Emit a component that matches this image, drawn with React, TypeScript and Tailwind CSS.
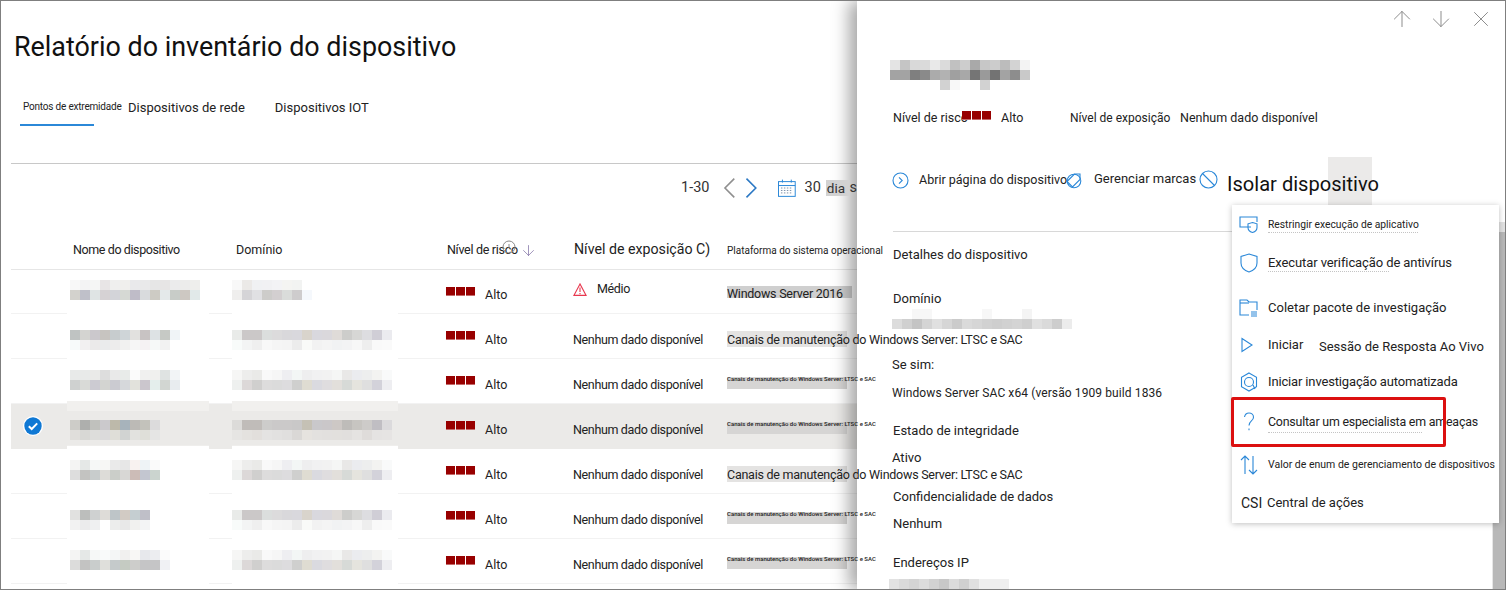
import { ReactNode } from 'react';
import { ArrowDown, ArrowUp, X } from 'lucide-react';

type Grid = string[][];

const split = (s: string) => s.split(' ').map((c) => '#' + c);

const names: Grid[] = [
  [split('f8f8f8 f3f3f4 f5f6f5 e8e5e6 efefee f0efed e9e9eb e9e9ea e6e6e6 e7e5e5 ebebec ececeb eeeeec'), split('d3d2cd bfc0c9 dfe4e4 d6d2d4 d3d4d9 d6d9d4 bfbcc8 d9dbdd cdcbc4 e4e9ea c8ccc8 cdc8c2 e1e9e9')],
  [split('bfc3c2 d4d4d1 cbc8cc c7c4c0 c7ccce cfd5d8 e2e1df c8c3c3 dde2e4 c6c9c5 f0f4f7'), split('f7fafa f2f0f1 ebeaea eaebec edecec f1f1f0 f6f6f6 f5f2f3 f6f9f8 f2f2f2')],
  [split('e8eae9 e8eae9 eaeae8 dddddd e9e9e9 e8ebe9 fbfbfb f0f0ef f0f0ee dfe3e2 f2f4f6'), split('cfd1d0 d9dad7 cccbd2 d3d4d1 cbcbd1 d6d8db e2e2dc cbc6cd e4eeec d2d6d2 e8ecef')],
  [split('cdccc8 aeafad c0c1bd cbc9cc bdb9aa a7b3bb bcbab6 c3c2bb dcdbdc'), split('e0dedb d8d8d5 dddddb dbdadb dfded8 d1d3d2 e2e2df dfdfd9 e5e5e4')],
  [split('f4f4f3 e5e8e7 f6f8f7 f7f7f5 eaeaea e7e7e7 f8f2f0 eef3f6 fafafa'), split('dddddd c3c3c1 c8cccc dddcd8 cbcec9 d8d7d5 ccbcb7 c3c6d0 cbd4cf')],
  [split('e1e1e0 bcbebc cfd1d1 dedcd8 bec5c8 d2cbc4 c5ced1 bfbfc8'), split('f2f2f2 ebebec eff0f1 ffffff ecedec e8e8e8 f1f1ef f3f4f5')],
  [split('f4f4f3 e5e8e7 f6f8f7 f9fafa f4f6f6 f1f0ef f8f7f5 e7e8ec ecedf0 fbfbfb'), split('dcdcdb c3c3c2 c9cdcc dfdfdb c5cacb c5cbc2 cdcdcb c5c5c6 c5c5c6 f0f1f4')],
];

const domainDark: Grid = [
  split('e9ebe9 cbc8c8 cbc8c8 dbdedd dcdbdc d9d8db d9d8dd d9d4cc d9d8de dad8dc dfdbd8 cdcdcb d7d7d5 dddde0 d0ced6 ebebef'),
  split('f8fbfa f3f4f4 efefef f8f8f8 f5f5f5 f4f4f4 ececec f9faf8 f2f2f2 f4f4f4 f1f2f3 f3f3f4 f7f7f7 eeeeee f9f9f9 fafafa'),
];
const domainLight: Grid = [
  split('f6f6f5 ededec eaeae8 f9f9f9 f6f6f6 eeeef1 f3f6f5 eeeeef f1f1f2 f2f2f2 f5f6f5 e9e8e7 ebecef edeeee f3f3f1 f9fafa'),
  split('eef0ef dcd8d8 d0cfce dddcdc dbdbdb dddcde cfcfce dfdcd2 dadae0 dfdddf e2dfdb d7dad7 e5e4de dfdfdf d3d2da eeeef1'),
];
const domains: Grid[] = [
  [split('f8f8f8 ebe9e7 f0f1f3 f1f1f3 f3f3f5 f4f4f2 f2f3f2'), split('efeeed d5d4d7 e0e0e3 cdccca d3cfd0 dadcda cecccd f5f8fc')],
  domainDark,
  domainLight,
  [
    split('dcdbd9 c0bcb9 c0bcb9 cdcccb cbc9c9 cbc9c9 c9c8c8 c5c1b5 c9c8cb cac7c9 cdc8c5 bebcb9 c7c5c1 cdcbc9 c0bec3 dbdadc'),
    split('e6e5e3 e4e2df e2dfdc e4e3e2 e2e1e0 e0dfde dad8d6 e6e3df e3e1df e2e0de e2e0dd e1dfdd e5e3e1 dfdcda e5e3e2 e6e4e3'),
  ],
  domainLight,
  domainDark,
  domainLight,
];

const panelTitle: Grid = [
  split('e4e4e4 c5c5c5 d9d9d9 dadada e9e9e9 dbdbdb c1c1c1 cdcdcd a9a9a9 c7c7c7 cccccc bcbcbc d3d3d3 f3f3f3'),
  split('a3a3a3 a3a3a3 7f7f7f 8a8a8a ababab b2b2b2 a0a0a0 a8a8a8 757575 9a9a9a 737373 a3a3a3 8d8d8d c9c9c9'),
  split('ffffff ffffff ffffff ffffff ffffff d2d2d2 f8f8f8 ffffff ffffff d2d2d2 ffffff ffffff ffffff ffffff'),
];
const panelDomain: Grid = [
  split('ffffff ffffff f7f7f7 f7f7f7 ffffff ffffff ffffff ffffff ffffff f7f7f7 ffffff ffffff ffffff f4f4f4 ffffff ffffff ffffff ffffff'),
  split('dcdcdc d0d0d0 c4c4c4 d4d4d4 e0e0e0 d6d6d6 cbcbcb dadada d6d6d6 d1d1d1 cecece d1d1d1 d4d4d4 cfcfcf e0e0e0 dadada cdcdcd ececec'),
];
const panelIp: Grid = [split('e2e2e2 dadada d4d4d4 dcdcdc d2d2d2 c8c8c8 dcdcdc d0d0d0 e0e0e0 efefef efefef efefef')];

function Mosaic({ rows }: { rows: Grid }) {
  return (
    <div className="relative flex flex-col">
      {rows.map((row, i) => (
        <div key={i} className="flex h-[10px]">
          {row.map((color, j) => (
            <div key={j} className="h-[10px] w-[10px]" style={{ backgroundColor: color }} />
          ))}
        </div>
      ))}
    </div>
  );
}

function RiskBars({ className = '' }: { className?: string }) {
  return (
    <div className={'flex gap-px ' + className}>
      <div className="h-[9px] w-[9px] border-b border-[#c46a6a] bg-[#980000]" />
      <div className="h-[9px] w-[9px] border-b border-[#c46a6a] bg-[#980000]" />
      <div className="h-[9px] w-[9px] border-b border-[#c46a6a] bg-[#980000]" />
    </div>
  );
}

// rows of the list, top to bottom
const rowInfo = [
  { nameTop: 10, exposure: 'warn', platform: 'server2016' },
  { nameTop: 16, exposure: 'none', platform: 'long' },
  { nameTop: 11, exposure: 'none', platform: 'tiny' },
  { nameTop: 16, exposure: 'none', platform: 'tiny', selected: true },
  { nameTop: 11, exposure: 'none', platform: 'long' },
  { nameTop: 16, exposure: 'none', platform: 'tiny' },
  { nameTop: 11, exposure: 'none', platform: 'tiny' },
];

function Platform({ kind }: { kind: string }) {
  if (kind === 'server2016') {
    return (
      <div className="relative flex h-full items-center pt-[5px]">
        <div className="absolute left-0 top-[16px] h-[12px] w-[125px] bg-[#cfcfcf]" />
        <span className="relative z-20 whitespace-nowrap text-[12.5px] tracking-[-0.25px] text-[#222]">Windows Server 2016</span>
      </div>
    );
  }
  if (kind === 'long') {
    return (
      <div className="relative flex h-full items-center pt-[8px]">
        <div className="absolute left-0 top-[17px] h-[16px] w-[120px] bg-[#e4e3e2]" />
        <span className="relative z-20 whitespace-nowrap text-[12.5px] tracking-[-0.25px] text-[#222]">
          Canais de manutenção do Windows Server: LTSC e SAC
        </span>
      </div>
    );
  }
  return (
    <div className="relative h-full">
      <div className="absolute left-0 top-[18px] h-[12px] w-[120px] bg-[#d6d5d4]" />
      <span className="absolute left-0 top-[15px] z-20 whitespace-nowrap text-[6px] font-medium leading-[10px] text-[#222]">
        Canais de manutenção do Windows Server: LTSC e SAC
      </span>
    </div>
  );
}

function TableRow({ index }: { index: number }) {
  const info = rowInfo[index];
  const selected = !!info.selected;
  const patchTop = selected ? 'bg-[#f1f0ee]' : 'bg-white';
  const patchBottom = selected ? 'bg-[#efeeec]' : 'bg-white';
  return (
    <div
      className={
        'grid grid-cols-[59px_162px_214px_127px_154px_130px] border-b ' +
        (index === 0 ? 'h-[44px] ' : 'h-[45px] ') +
        (selected ? 'border-[#ebeae8] bg-[#ebeae8]' : 'border-[#f2f2f2]')
      }
    >
      <div className="flex items-center justify-center pr-[16px]">
        {selected && (
          <svg width="20" height="20" viewBox="0 0 20 20">
            <circle cx="10" cy="10" r="10" fill="#ffffff" />
            <circle cx="10" cy="10" r="8.7" fill="#0f78d4" />
            <path d="M5.8 10.2l2.9 2.8 5.5-5.6" fill="none" stroke="#fff" strokeWidth="2" />
          </svg>
        )}
      </div>
      <div className="relative">
        <div className={'absolute -left-[3px] -top-[3px] h-[10px] w-[142px] ' + (index === 0 ? '' : patchTop)} />
        <div className={'absolute -bottom-[3px] -left-[3px] h-[6px] w-[142px] ' + patchBottom} />
        <div className="absolute left-0" style={{ top: info.nameTop }}>
          <Mosaic rows={names[index]} />
        </div>
      </div>
      <div className="relative">
        <div className={'absolute left-0 -top-[3px] h-[10px] w-[166px] ' + (index === 0 ? '' : patchTop)} />
        <div className={'absolute -bottom-[3px] left-0 h-[6px] w-[166px] ' + patchBottom} />
        <div className="absolute left-0" style={{ top: info.nameTop }}>
          <Mosaic rows={domains[index]} />
        </div>
      </div>
      <div className={'flex items-center gap-[10px] ' + (index === 0 ? 'pt-[7px]' : 'pt-[9px]')}>
        <RiskBars className={index === 0 ? 'mb-[7px]' : 'mb-[10px]'} />
        <span className="text-[12.5px] text-[#222]">Alto</span>
      </div>
      <div className="flex items-center whitespace-nowrap pt-[9px] text-[12.5px] tracking-[-0.35px] text-[#222]">
        {info.exposure === 'warn' ? (
          <div className="-mt-[14px] flex items-center gap-[10px]">
            <svg width="14" height="13" viewBox="0 0 14 13" fill="none" stroke="#e8384f" strokeWidth="1.1">
              <path d="M7 .9L.9 12.4h12.2z" />
              <path d="M7 4.6v4.4M7 10v1.200" />
            </svg>
            <span>Médio</span>
          </div>
        ) : (
          <span>Nenhum dado disponível</span>
        )}
      </div>
      <Platform kind={info.platform} />
    </div>
  );
}

function PanelLabel({ children, className = '' }: { children: ReactNode; className?: string }) {
  return <div className={'whitespace-nowrap text-[13px] leading-[16px] text-[#222] ' + className}>{children}</div>;
}

function MenuItem({ icon, children, className = '' }: { icon: ReactNode; children: ReactNode; className?: string }) {
  return (
    <div className={'flex items-center whitespace-nowrap text-[#222] ' + className}>
      <div className="flex w-[36px] shrink-0 justify-center pr-[2px]">{icon}</div>
      {children}
    </div>
  );
}

// specks of the older label that still peek out under the menu text
function Speck({ top, width }: { top: number; width: number }) {
  return <div className="absolute left-[36px] border-b border-dotted border-[#c4c4c4]" style={{ top, width }} />;
}

const iconProps = { fill: 'none', stroke: '#2b88d8', strokeWidth: 1.1 };

export default function App() {
  return (
    <div
      className="relative h-[590px] w-[1506px] overflow-hidden border border-[#7f7f7f] bg-white"
      style={{ fontFamily: 'Roboto, "Open Sans", sans-serif' }}
    >
      {/* Left list page */}
      <div className="w-[856px] pl-[10px]">
        <h1 className="pl-[3px] pt-[28px] text-[26.9px] font-normal leading-[36px] text-[#111]">
          Relatório do inventário do dispositivo
        </h1>

        <div className="mt-[25px] flex h-[37px] items-start">
          <div className="ml-[9px] h-[36px] w-[74px] border-b-2 border-[#2b88d8]">
            <div className="ml-[3px] w-[98px] whitespace-nowrap pt-[9px] text-[10px] leading-[16px] tracking-[-0.2px] text-[#222]">
              Pontos de extremidade
            </div>
          </div>
          <div className="ml-[34px] pt-[9px] text-[13px] leading-[18px] text-[#222]">Dispositivos de rede</div>
          <div className="ml-[30px] pt-[9px] text-[13px] leading-[18px] text-[#222]">Dispositivos IOT</div>
        </div>

        <div className="mt-[36px] border-t border-[#c8c8c8]" />

        <div className="flex h-[45px] items-center pl-[670px] pt-[2px] text-[14.5px] text-[#333]">
          <span className="w-[42px]">1-30</span>
          <svg width="14" height="22" viewBox="0 0 14 22" fill="none" stroke="#8f8f8f" strokeWidth="1.6">
            <path d="M12.500 1.500L3 11l9.500 9.500" />
          </svg>
          <svg width="14" height="22" viewBox="0 0 14 22" className="ml-[9px]" fill="none" stroke="#2b78c4" strokeWidth="1.6">
            <path d="M1.500 1.500L11 11l-9.500 9.500" />
          </svg>
          <svg width="18" height="18" viewBox="0 0 18 18" className="ml-[19px]" fill="none" stroke="#2b88d8">
            <rect x="0.5" y="2.5" width="17" height="15" />
            <path d="M0.5 6.5h17M4.500 0.5v3M13.500 0.5v3" />
            <path d="M3 9h12M3 11.500h12M3 14h12" stroke="#7a8fa8" strokeDasharray="1.5 1.5" />
          </svg>
          <span className="ml-[9px]">30</span>
          <span className="relative z-20 ml-[5px] w-[24px] whitespace-nowrap bg-[#d2d2d2] pl-[1px] text-[13.500px] leading-[16px]">dia</span>
          <span className="relative z-20">s</span>
        </div>

        {/* Table */}
        <div className="mt-[22px] grid h-[39px] grid-cols-[59px_162px_214px_127px_154px_130px] items-center border-b border-[#e6e6e6] text-[12.5px] text-[#222]">
          <div />
          <div className="pl-[3px] pt-[1px] tracking-[-0.4px]">Nome do dispositivo</div>
          <div className="pl-[4px]">Domínio</div>
          <div className="relative flex items-center pl-[1px] pt-[1px]">
            <span className="relative w-[73px] whitespace-nowrap tracking-[-0.3px]">Nível de risco</span>
            <svg width="14" height="14" viewBox="0 0 14 14" className="absolute left-[56px] top-[0px]" fill="none" stroke="#8a8a8a">
              <circle cx="7" cy="7" r="6" />
              <path d="M7 4v4" />
            </svg>
            <ArrowDown size={17} strokeWidth={1} className="text-[#7a6aa0]" />
          </div>
          <div className="whitespace-nowrap pl-[1px] text-[14.2px]">Nível de exposição C)</div>
          <div className="relative z-20 whitespace-nowrap text-[10px]">Plataforma do sistema operacional</div>
        </div>

        {rowInfo.map((_, i) => (
          <TableRow key={i} index={i} />
        ))}
      </div>

      {/* Device side panel */}
      <aside className="absolute bottom-0 left-[856px] right-0 top-0 z-10 bg-white pl-[36px] shadow-[-8px_0_16px_rgba(0,0,0,0.35)]">
        <div className="absolute right-[11px] top-[5px] flex items-center gap-[13px] text-[#8a8a8a]">
          <ArrowUp size={26} strokeWidth={0.9} />
          <ArrowDown size={26} strokeWidth={0.9} />
          <X size={26} strokeWidth={0.9} className="ml-[1px]" />
        </div>

        <div className="-ml-[3px] pt-[59px]">
          <Mosaic rows={panelTitle} />
        </div>

        <div className="mt-[20px] flex h-[16px] items-center text-[12.5px] leading-[16px] text-[#222]">
          <span className="w-[69px] whitespace-nowrap">Nível de risco</span>
          <RiskBars className="-mt-[6px]" />
          <span className="ml-[10px] w-[35px]">Alto</span>
          <span className="ml-[34px] w-[110px] whitespace-nowrap text-[12px]">Nível de exposição</span>
          <span className="whitespace-nowrap">Nenhum dado disponível</span>
        </div>

        <div className="relative -ml-[1px] mt-[30px] flex h-[48px] items-center text-[12.5px] text-[#222]">
          <svg width="17" height="17" viewBox="0 0 17 17" {...iconProps}>
            <circle cx="8.5" cy="8.5" r="7.5" />
            <path d="M7 5.3l3.2 3.2L7 11.7" />
          </svg>
          <span className="ml-[10px] w-[146px] whitespace-nowrap">Abrir página do dispositivo</span>
          <svg width="17" height="17" viewBox="0 0 17 17" {...iconProps}>
            <path d="M2 9.5L9.5 2H15v5.500L7.5 15z" />
            <circle cx="9" cy="9" r="6.8" />
          </svg>
          <span className="ml-[12px] w-[105px] whitespace-nowrap text-[13px] -translate-y-[1px]">Gerenciar marcas</span>
          <svg width="19" height="19" viewBox="0 0 19 19" className="-translate-y-[1px]" {...iconProps}>
            <circle cx="9.5" cy="9.5" r="8.5" />
            <path d="M3.5 3.5l12 12" />
          </svg>
          <div className="absolute left-[436px] top-[1px] h-[48px] w-[44px] bg-[#ebeae9]" />
          <span className="relative ml-[9px] whitespace-nowrap pt-[9px] text-[20.1px] text-[#111]">Isolar dispositivo</span>
        </div>

        <div className="mt-[27px] w-[600px] border-t border-[#d8d8d8]" />

        <PanelLabel className="mt-[15px]">Detalhes do dispositivo</PanelLabel>
        <PanelLabel className="mt-[28px]">Domínio</PanelLabel>
        <div className="-ml-[1px] mt-[2px]">
          <Mosaic rows={panelDomain} />
        </div>
        <PanelLabel className="-ml-[1px] mt-[28px]">Se sim:</PanelLabel>
        <div className="-ml-[1px] mt-[12px] whitespace-nowrap text-[12px] leading-[16px] tracking-[0.1px] text-[#222]">
          Windows Server SAC x64 (versão 1909 build 1836
        </div>
        <PanelLabel className="mt-[22px]">Estado de integridade</PanelLabel>
        <PanelLabel className="-ml-[1px] mt-[11px]">Ativo</PanelLabel>
        <PanelLabel className="mt-[23px]">Confidencialidade de dados</PanelLabel>
        <PanelLabel className="mt-[11px]">Nenhum</PanelLabel>
        <PanelLabel className="mt-[23px]">Endereços IP</PanelLabel>
        <div className="-ml-[4px] mt-[8px]">
          <Mosaic rows={panelIp} />
        </div>

        {/* Scrollbar */}
        <div className="absolute bottom-0 right-0 top-[231px] w-[13px] border-l border-[#e6e6e6] bg-[#b8b8b8]" />
        <div className="absolute right-0 top-[221px] h-[10px] w-[6px] bg-[#e2e2e2]" />
      </aside>

      {/* Actions dropdown */}
      <div className="absolute left-[1231px] top-[204px] z-30 flex h-[318px] w-[267px] flex-col bg-white pt-[1px] shadow-[0_1px_6px_rgba(0,0,0,0.25)]">
        <MenuItem className="h-[38px] shrink-0 text-[10.3px]" icon={
          <svg width="20" height="18" viewBox="0 0 20 18" {...iconProps}>
            <path d="M12 11H1V1h17v5" />
            <path d="M13.500 6.500l4.500 1.300v3.600c0 2.400-2 4.300-4.500 5.100-2.500-.8-4.500-2.700-4.500-5.100V7.800z" />
          </svg>
        }>
          Restringir execução de aplicativo
        </MenuItem>
        <MenuItem className="h-[38px] shrink-0 text-[13px] tracking-[-0.1px]" icon={
          <svg width="18" height="20" viewBox="0 0 18 20" {...iconProps}>
            <path d="M9 1l8 2.500v6.500c0 4.500-3.500 7.500-8 9-4.500-1.500-8-4.500-8-9V3.500z" />
          </svg>
        }>
          Executar verificação de antivírus
        </MenuItem>
        <MenuItem className="h-[52px] shrink-0 text-[13px]" icon={
          <svg width="20" height="18" viewBox="0 0 20 18" {...iconProps}>
            <path d="M10 16H1V1h7l2 2h8v8" />
            <path d="M1 4h9" />
            <path d="M12 13h7M12 15h7M12 17h7" strokeDasharray="6 1" />
          </svg>
        }>
          Coletar pacote de investigação
        </MenuItem>
        <MenuItem className="h-[22px] shrink-0 text-[13px]" icon={
          <svg width="14" height="16" viewBox="0 0 14 16" className="-ml-[4px]" {...iconProps}>
            <path d="M2 1.500l10 6.500-10 6.500z" />
          </svg>
        }>
          <span className="w-[51px]">Iniciar</span>
          <span className="pt-[3px]">Sessão de Resposta Ao Vivo</span>
        </MenuItem>
        <MenuItem className="mt-[15px] h-[22px] shrink-0 text-[13px] tracking-[-0.15px]" icon={
          <svg width="18" height="20" viewBox="0 0 18 20" {...iconProps}>
            <path d="M9 1l7.500 4.300v9.400L9 19l-7.500-4.300V5.300z" />
            <circle cx="9" cy="10" r="4.500" />
            <path d="M13 13l2 4" />
          </svg>
        }>
          Iniciar investigação automatizada
        </MenuItem>
        <MenuItem className="mt-[18px] h-[22px] shrink-0 text-[12.4px] tracking-[-0.2px]" icon={
          <svg width="14" height="20" viewBox="0 0 14 20" {...iconProps}>
            <path d="M2.500 5c.5-2.500 2.500-4 4.500-4 2.500 0 4.500 1.800 4.500 4.200 0 3.800-4.500 3.800-4.500 8.300M7 16.500v1.800" />
          </svg>
        }>
          Consultar um especialista em ameaças
        </MenuItem>
        <MenuItem className="mt-[21px] h-[22px] shrink-0 text-[10.5px]" icon={
          <svg width="18" height="20" viewBox="0 0 18 20" {...iconProps}>
            <path d="M5 19V1M1 5l4-4 4 4" />
            <path d="M13 1v18M9 15l4 4 4-4" />
          </svg>
        }>
          Valor de enum de gerenciamento de dispositivos
        </MenuItem>
        <div className="mt-[16px] flex h-[22px] shrink-0 items-center whitespace-nowrap pl-[9px] text-[13px] text-[#222]">
          <span className="w-[26px] text-[14px]">CSI</span>
          Central de ações
        </div>
        <Speck top={27} width={150} />
        <Speck top={66} width={121} />
        <Speck top={227} width={154} />
      </div>

      {/* Red callout box */}
      <div className="absolute left-[1230px] top-[396px] z-40 h-[50px] w-[215px] rounded-[2px] border-[3px] border-[#dc1010]" />
    </div>
  );
}
